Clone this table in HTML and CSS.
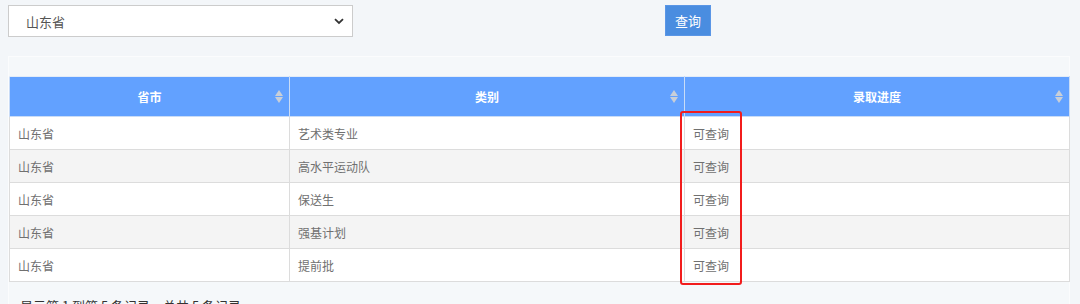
FILE: index.html
```html
<!DOCTYPE html>
<html lang="zh">
<head>
<meta charset="utf-8">
<link rel="stylesheet" href="styles.css">
</head>
<body>
<div class="toolbar">
  <div class="select">
    <span>山东省</span>
    <svg class="chev" width="10" height="7" viewBox="0 0 10 7"><path d="M1 1.2 L5 5 L9 1.2" fill="none" stroke="#333" stroke-width="1.8"/></svg>
  </div>
  <button class="btn">查询</button>
</div>
<div class="panel">
  <table class="grid">
    <colgroup><col class="c1"><col class="c2"><col class="c3"></colgroup>
    <thead>
      <tr>
        <th><span>省市</span><i class="sort"></i></th>
        <th><span>类别</span><i class="sort"></i></th>
        <th><span>录取进度</span><i class="sort"></i></th>
      </tr>
    </thead>
    <tbody>
      <tr><td>山东省</td><td>艺术类专业</td><td>可查询</td></tr>
      <tr class="alt"><td>山东省</td><td>高水平运动队</td><td>可查询</td></tr>
      <tr><td>山东省</td><td>保送生</td><td>可查询</td></tr>
      <tr class="alt"><td>山东省</td><td>强基计划</td><td>可查询</td></tr>
      <tr><td>山东省</td><td>提前批</td><td>可查询</td></tr>
    </tbody>
  </table>
  <div class="mark"></div>
  <div class="info">显示第 1 到第 5 条记录，总共 5 条记录</div>
</div>
</body>
</html>
```
FILE: styles.css
```css
html, body { margin: 0; padding: 0; }
body {
  background: #f3f6f9;
  font-family: "Noto Sans CJK SC", "Noto Sans", sans-serif;
  font-size: 12px;
  color: #666;
  width: 1080px;
  height: 304px;
  overflow: hidden;
}
.toolbar {
  display: flex;
  align-items: flex-start;
  padding: 5px 8px 0 8px;
}
.select {
  box-sizing: border-box;
  width: 345px;
  height: 32px;
  background: #fff;
  border: 1px solid #ccc;
  display: flex;
  align-items: center;
  justify-content: space-between;
  padding: 0 8px 0 17px;
  font-size: 13px;
  color: #555;
}
.btn {
  box-sizing: border-box;
  margin-left: 312px;
  width: 46px;
  height: 31px;
  border: 1px solid #5a96e6;
  background: #4a8de0;
  color: #fff;
  font-family: "Noto Sans CJK SC", sans-serif;
  font-size: 13px;
  padding: 0;
}
.panel {
  position: relative;
  margin: 19px 10px 0 8px;
  border: 1px solid #fbfcfd;
  background: #f5f8fa;
  padding: 19px 0 0 0;
  height: 240px;
}
.grid {
  border-collapse: collapse;
  table-layout: fixed;
  width: 1060px;
}
.c1 { width: 280px; }
.c2 { width: 395px; }
.c3 { width: 385px; }
.grid th {
  position: relative;
  height: 39px;
  padding: 0;
  background: #62a1ff;
  color: #fff;
  font-weight: bold;
  font-size: 12px;
  border: 1px solid #c9dcf7;
  border-top: 1px solid #e3ecf8;
  text-align: center;
}
.sort {
  position: absolute;
  right: 6px;
  top: 13px;
  width: 8px;
  height: 14px;
}
.sort::before, .sort::after {
  content: "";
  position: absolute;
  left: 0;
  border-left: 4px solid transparent;
  border-right: 4px solid transparent;
}
.sort::before { top: 0; border-bottom: 6px solid #c9cfd8; }
.sort::after { top: 7px; border-top: 6px solid #c9cfd8; }
.grid td {
  height: 32px;
  padding: 0 0 0 8px;
  border: 1px solid #dcdcdc;
  background: #fff;
  color: #707070;
  font-size: 12px;
}
.grid tr.alt td { background: #f4f4f4; }
.mark {
  position: absolute;
  left: 671px;
  top: 54px;
  width: 58px;
  height: 170px;
  border: 2px solid #f21c1c;
  border-radius: 3px;
}
.info {
  margin: 14px 0 0 11px;
  font-size: 13px;
  color: #333;
}
```
